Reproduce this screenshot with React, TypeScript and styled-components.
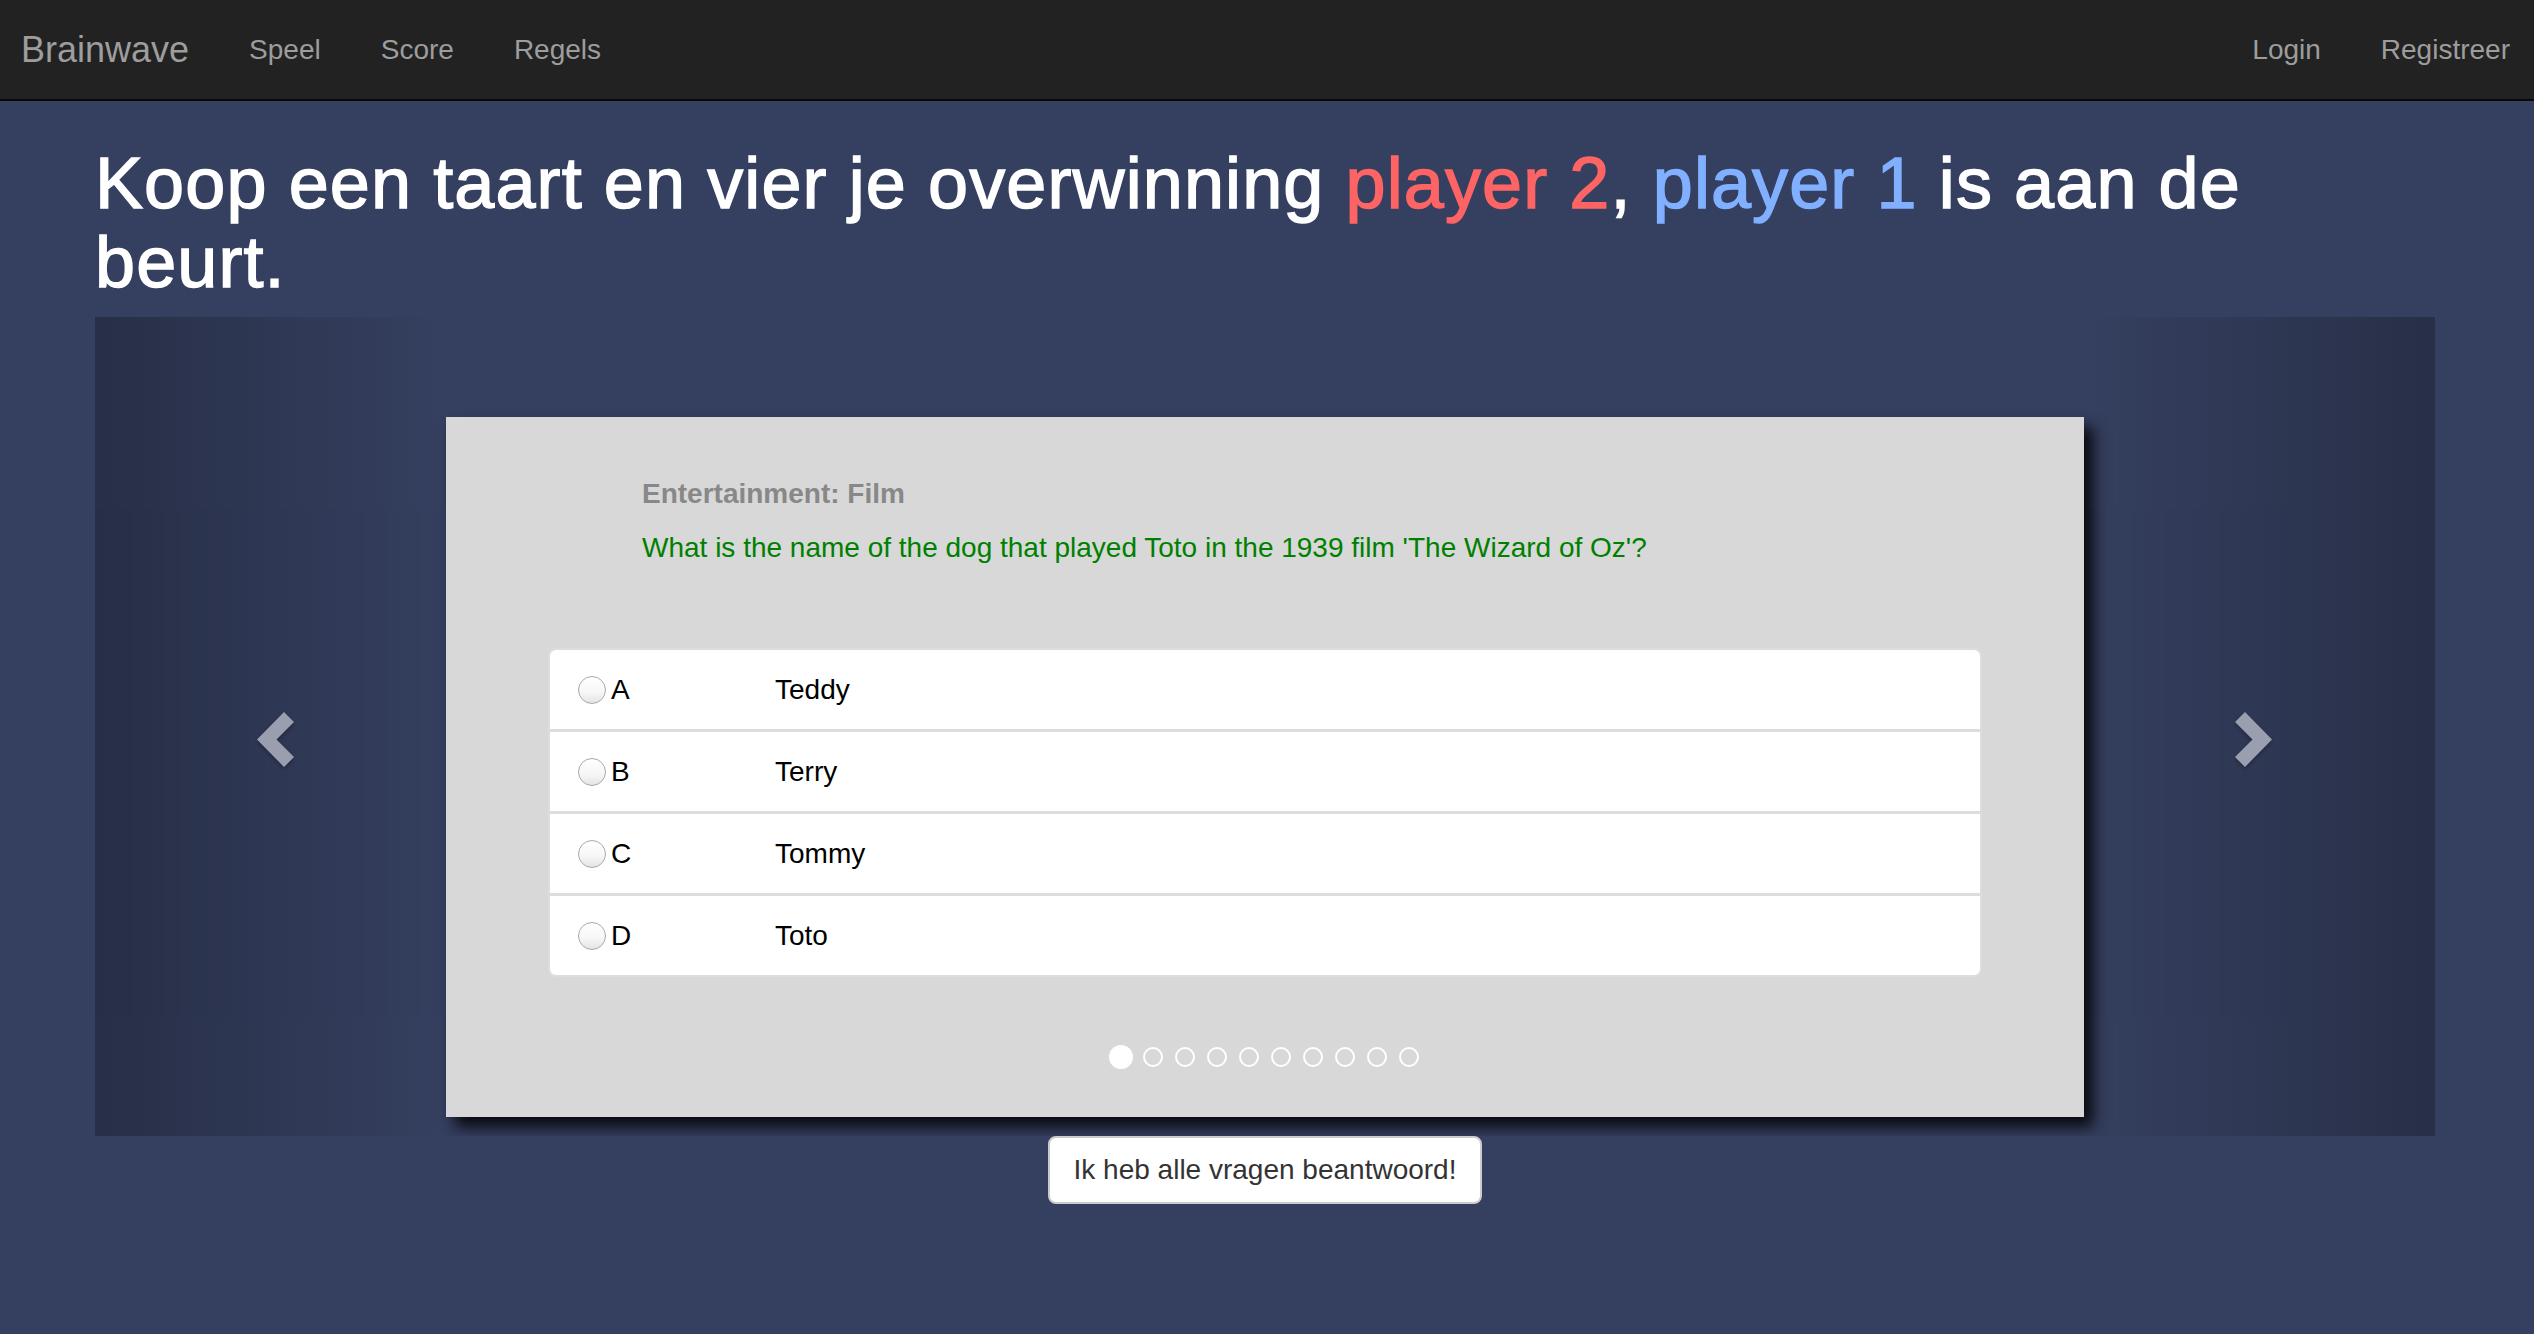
import React from "react";
import styled, { createGlobalStyle } from "styled-components";

const GlobalStyle = createGlobalStyle`
  html, body {
    margin: 0;
    padding: 0;
    background: #353f5f;
    font-family: "Liberation Sans", Arial, Helvetica, sans-serif;
  }
  * { box-sizing: border-box; }
`;

const Navbar = styled.nav`
  height: 101px;
  background: #222222;
  border-bottom: 2px solid #080808;
  display: flex;
  align-items: center;
  justify-content: space-between;
  padding-left: 21px;
`;

const NavGroup = styled.div`
  display: flex;
  align-items: center;
`;

const Brand = styled.a`
  font-size: 36px;
  line-height: 40px;
  color: #9d9d9d;
  text-decoration: none;
  padding-right: 30px;
`;

const NavLink = styled.a<{ $last?: boolean }>`
  font-size: 28px;
  line-height: 40px;
  color: #9d9d9d;
  text-decoration: none;
  padding: 0 ${(p) => (p.$last ? "24px" : "30px")} 0 30px;
`;

const Container = styled.main`
  width: 2340px;
  margin: 0 auto;
  position: relative;
  left: -2px;
`;

const Heading = styled.h1`
  margin: 43px 0 15px;
  font-size: 72px;
  line-height: 1.1;
  font-weight: 500;
  color: #ffffff;
  letter-spacing: 1.1px;
  -webkit-text-stroke: 1.4px currentColor;
`;

const Player = styled.span<{ $color: string }>`
  color: ${(p) => p.$color};
`;

const Carousel = styled.section`
  position: relative;
  overflow: hidden;
  padding: 100px 15% 19px;
`;

const Card = styled.div`
  height: 700px;
  background: #d8d8d8;
  box-shadow: 9px 10px 14px rgba(0, 0, 0, 0.85);
  padding: 57px 102px 0;
  display: flex;
  flex-direction: column;
`;

const Category = styled.div`
  margin-left: 94px;
  font-size: 28px;
  line-height: 40px;
  font-weight: 700;
  color: #888888;
`;

const Question = styled.div`
  margin: 14px 0 0 94px;
  font-size: 28px;
  line-height: 40px;
  color: #008000;
`;

const AnswerList = styled.div`
  margin-top: 80px;
  display: flex;
  flex-direction: column;
`;

const AnswerRow = styled.label`
  display: flex;
  align-items: center;
  height: 83px;
  padding: 0 28px;
  background: #ffffff;
  border: 2px solid #dddddd;
  margin-bottom: -1px;
  font-size: 28px;
  color: #000000;
  &:first-child {
    border-top-left-radius: 8px;
    border-top-right-radius: 8px;
  }
  &:last-child {
    margin-bottom: 0;
    border-bottom-left-radius: 8px;
    border-bottom-right-radius: 8px;
  }
`;

const Radio = styled.input.attrs({ type: "radio" })`
  appearance: none;
  -webkit-appearance: none;
  width: 28px;
  height: 28px;
  margin: 0 5px 0 0;
  border-radius: 50%;
  border: 1.5px solid #a8a8a8;
  background: linear-gradient(#ffffff 0%, #f6f6f6 60%, #e4e4e4 100%);
  box-shadow: inset 0 1px 1px rgba(255, 255, 255, 0.9);
  flex-shrink: 0;
`;

const Letter = styled.span`
  width: 164px;
`;

const Indicators = styled.ol`
  list-style: none;
  margin: 68px 0 0;
  padding: 0;
  display: flex;
  justify-content: center;
  align-items: center;
  gap: 8px;
`;

const Dot = styled.li<{ $active?: boolean }>`
  width: ${(p) => (p.$active ? "24px" : "20px")};
  height: ${(p) => (p.$active ? "24px" : "20px")};
  margin: ${(p) => (p.$active ? "0" : "2px")};
  border-radius: 50%;
  border: 2px solid #ffffff;
  background: ${(p) => (p.$active ? "#ffffff" : "transparent")};
`;

const Control = styled.a<{ $side: "left" | "right" }>`
  position: absolute;
  top: 0;
  bottom: 0;
  ${(p) => p.$side}: 0;
  width: 15%;
  opacity: 0.5;
  display: flex;
  align-items: center;
  justify-content: center;
  padding-top: 26px;
  ${(p) => (p.$side === "left" ? "padding-left: 10px;" : "padding-right: 12px;")}
  background-image: linear-gradient(
    ${(p) => (p.$side === "left" ? "to right" : "to left")},
    rgba(0, 0, 0, 0.5) 0%,
    rgba(0, 0, 0, 0.0001) 100%
  );
`;

const Chevron = styled.svg`
  width: 37px;
  height: 55px;
  filter: drop-shadow(0 2px 2px rgba(0, 0, 0, 0.6));
`;

const Footer = styled.div`
  display: flex;
  justify-content: center;
`;

const DoneButton = styled.button`
  font-family: inherit;
  font-size: 28px;
  line-height: 40px;
  color: #333333;
  background: #ffffff;
  border: 2px solid #cccccc;
  border-radius: 8px;
  padding: 12px 24px;
`;

const answers = [
  { letter: "A", text: "Teddy" },
  { letter: "B", text: "Terry" },
  { letter: "C", text: "Tommy" },
  { letter: "D", text: "Toto" },
];

function ChevronIcon({ dir }: { dir: "left" | "right" }) {
  const points =
    dir === "right"
      ? "10,0 37,27.5 10,55 0,45 17.5,27.5 0,10"
      : "27,0 0,27.5 27,55 37,45 19.5,27.5 37,10";
  return (
    <Chevron viewBox="0 0 37 55">
      <polygon points={points} fill="#ffffff" />
    </Chevron>
  );
}

export default function App() {
  return (
    <>
      <GlobalStyle />
      <Navbar>
        <NavGroup>
          <Brand href="#">Brainwave</Brand>
          <NavLink href="#">Speel</NavLink>
          <NavLink href="#">Score</NavLink>
          <NavLink href="#">Regels</NavLink>
        </NavGroup>
        <NavGroup>
          <NavLink href="#">Login</NavLink>
          <NavLink href="#" $last>
            Registreer
          </NavLink>
        </NavGroup>
      </Navbar>
      <Container>
        <Heading>
          Koop een taart en vier je overwinning{" "}
          <Player $color="#ff6464">player 2</Player>,{" "}
          <Player $color="#80b0ff">player 1</Player> is aan de beurt.
        </Heading>
        <Carousel>
          <Card>
            <Category>Entertainment: Film</Category>
            <Question>
              What is the name of the dog that played Toto in the 1939 film 'The Wizard of Oz'?
            </Question>
            <AnswerList>
              {answers.map((a) => (
                <AnswerRow key={a.letter}>
                  <Radio name="answer" />
                  <Letter>{a.letter}</Letter>
                  <span>{a.text}</span>
                </AnswerRow>
              ))}
            </AnswerList>
            <Indicators>
              {Array.from({ length: 10 }).map((_, i) => (
                <Dot key={i} $active={i === 0} />
              ))}
            </Indicators>
          </Card>
          <Control $side="left" href="#">
            <ChevronIcon dir="left" />
          </Control>
          <Control $side="right" href="#">
            <ChevronIcon dir="right" />
          </Control>
        </Carousel>
        <Footer>
          <DoneButton>Ik heb alle vragen beantwoord!</DoneButton>
        </Footer>
      </Container>
    </>
  );
}
